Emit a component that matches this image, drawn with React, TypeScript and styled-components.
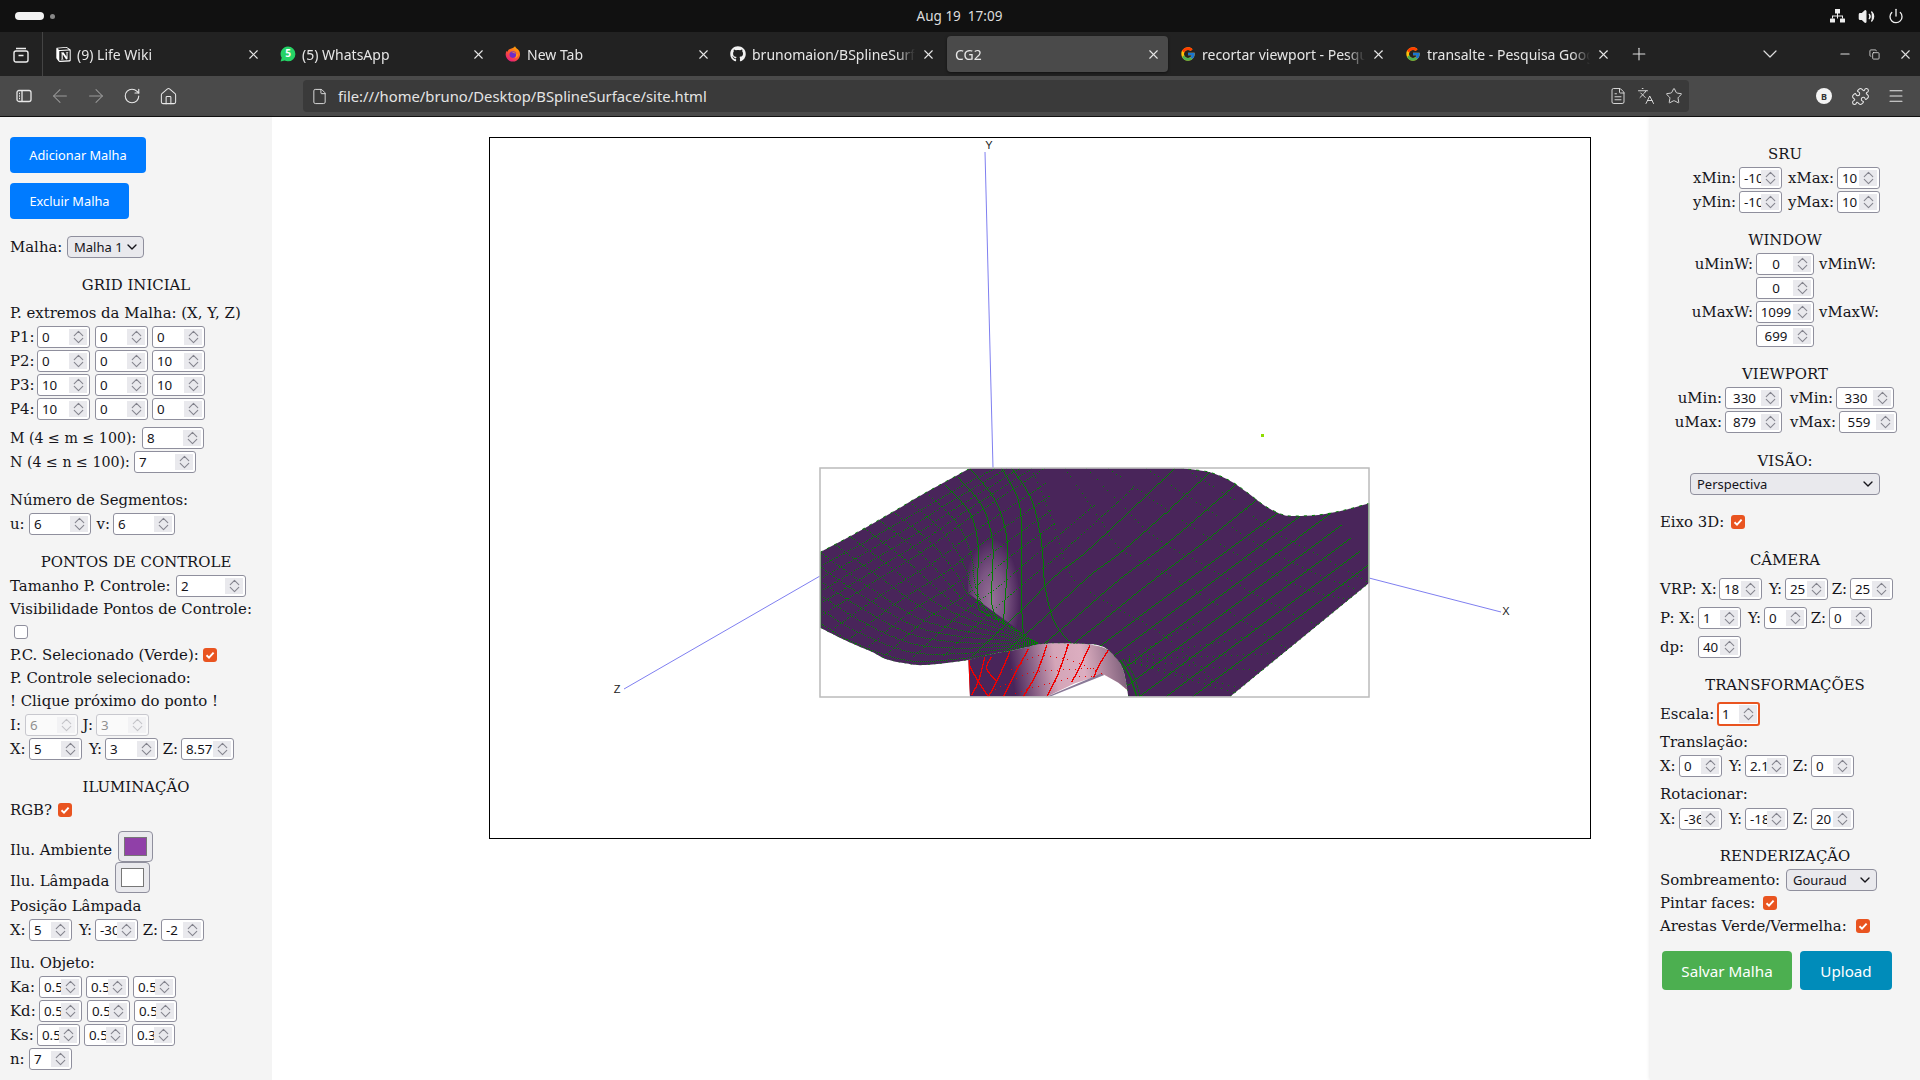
import React from "react"
import styled, { createGlobalStyle } from "styled-components"
import {
  ArrowLeft,
  ArrowRight,
  ChevronDown,
  ChevronUp,
  Copy,
  File,
  FileText,
  Home,
  Languages,
  Menu,
  Minus,
  Plus,
  Power,
  Puzzle,
  RotateCw,
  Star,
  Volume2,
  X,
} from "lucide-react"
import { FaGithub } from "react-icons/fa"
import { FcGoogle } from "react-icons/fc"
import { SiNotion } from "react-icons/si"

const GlobalStyle = createGlobalStyle`
  html, body {
    margin: 0;
    padding: 0;
    width: 1920px;
    height: 1080px;
    overflow: hidden;
    background: #fff;
  }
`

const Screen = styled.div`
  width: 1920px;
  height: 1080px;
  display: flex;
  flex-direction: column;
  font-family: "DejaVu Serif", serif;
  color: #15141a;
`

/* desktop + browser chrome */
const TopBar = styled.div`
  height: 32px;
  flex: none;
  background: #111;
  display: grid;
  grid-template-columns: 1fr auto 1fr;
  align-items: center;
  padding: 0 16px 0 15px;
  color: #ddd;
  font: 13.5px "Noto Sans", sans-serif;
`

const Workspaces = styled.div`
  display: flex;
  align-items: center;
  gap: 6px;
`

const Pill = styled.span`
  width: 29px;
  height: 8px;
  border-radius: 4px;
  background: #f2f2f2;
`

const Dot = styled.span`
  width: 5px;
  height: 5px;
  border-radius: 50%;
  background: #888;
`

const Clock = styled.div`
  white-space: pre;
`

const Tray = styled.div`
  display: flex;
  justify-content: flex-end;
  align-items: center;
  gap: 13px;
  color: #eee;
`

const TabBar = styled.div`
  height: 44px;
  flex: none;
  background: #222;
  display: flex;
  align-items: center;
  color: #e6e6e6;
  font: 14px "Noto Sans", sans-serif;
`

const TabsButton = styled.div`
  width: 42px;
  height: 44px;
  flex: none;
  display: flex;
  align-items: center;
  justify-content: center;
  border-right: 1px solid #444;
  margin-right: 4px;
`

const Tab = styled.div<{ $active?: boolean }>`
  width: 221px;
  height: 36px;
  flex: none;
  margin-right: 4px;
  padding: 0 8px;
  box-sizing: border-box;
  display: flex;
  align-items: center;
  gap: 6px;
  border-radius: 4px;
  background: ${({ $active }) => ($active ? "#4a4a4a" : "transparent")};
  box-shadow: ${({ $active }) => ($active ? "0 1px 3px rgba(0,0,0,.5)" : "none")};

  > svg {
    flex: none;
    margin-right: -1px;
  }
`

const TabIcon = styled.span`
  width: 16px;
  height: 16px;
  flex: none;
  display: flex;
  align-items: center;
  justify-content: center;
`

const TabTitle = styled.span`
  flex: 1;
  min-width: 0;
  overflow: hidden;
  white-space: nowrap;
  mask-image: linear-gradient(to left, transparent 0, #000 18px);
`

const WindowControls = styled.div`
  display: flex;
  align-items: center;
  flex: 1;
  padding-left: 8px;
  color: #ddd;
`

const ToolBar = styled.div`
  height: 40px;
  flex: none;
  background: #4a4a4a;
  border-bottom: 1px solid #111;
  display: flex;
  align-items: center;
  padding-left: 15px;
  color: #e8e8e8;
`

const ToolIcon = styled.span<{ $dim?: boolean; $mr?: number }>`
  width: 18px;
  height: 18px;
  flex: none;
  display: flex;
  align-items: center;
  justify-content: center;
  margin-right: ${({ $mr }) => $mr ?? 18}px;
  color: ${({ $dim }) => ($dim ? "#9a9a9a" : "inherit")};

  svg {
    flex: none;
  }
`

const UrlBar = styled.div`
  width: 1386px;
  height: 32px;
  flex: none;
  margin: 0 126px;
  padding: 0 6px 0 8px;
  box-sizing: border-box;
  border-radius: 4px;
  background: #3a3a3a;
  display: flex;
  align-items: center;
  gap: 10px;
  font: 14.8px "Noto Sans", sans-serif;
  color: #e4e4e4;
`

const UrlText = styled.span`
  flex: 1;
`

const ProfileBadge = styled.span`
  width: 16px;
  height: 16px;
  border-radius: 50%;
  background: #f4f4f4;
  color: #333;
  font: bold 9px "Noto Sans", sans-serif;
  display: flex;
  align-items: center;
  justify-content: center;
`

/* page */
const Page = styled.div`
  flex: 1;
  min-height: 0;
  display: flex;
`

const Sidebar = styled.div<{ $width: number; $top: number }>`
  width: ${({ $width }) => $width}px;
  flex: none;
  box-sizing: border-box;
  padding: ${({ $top }) => $top}px 10px 0;
  background: #f4f4f4;
  box-shadow: 0 0 4px rgba(0, 0, 0, 0.12);
  font-size: 14.9px;
  overflow: hidden;
`

const Main = styled.div`
  flex: 1;
  padding: 20px 0 0 217px;
  background: #fff;
`

const CanvasBox = styled.svg`
  display: block;
  width: 1100px;
  height: 700px;
  border: 1px solid #000;
`

const Row = styled.div<{ $h?: number; $mt?: number; $pl?: number }>`
  display: flex;
  align-items: stretch;
  height: ${({ $h }) => $h ?? 22}px;
  margin-top: ${({ $mt }) => $mt ?? 0}px;
  padding-left: ${({ $pl }) => $pl ?? 0}px;
  white-space: nowrap;
`

const Line = styled(Row)`
  align-items: center;
`

const Heading = styled.div<{ $mt?: number }>`
  height: 22px;
  line-height: 22px;
  margin-top: ${({ $mt }) => $mt ?? 0}px;
  text-align: center;
  white-space: nowrap;
`

const Label = styled.span<{ $w?: number; $right?: boolean; $ml?: number; $pt?: number; $size?: number }>`
  flex: none;
  width: ${({ $w }) => ($w ? `${$w}px` : "auto")};
  margin-left: ${({ $ml }) => $ml ?? 0}px;
  padding-top: ${({ $pt }) => $pt ?? 0}px;
  padding-right: ${({ $right }) => ($right ? 3 : 0)}px;
  box-sizing: border-box;
  display: flex;
  align-items: center;
  justify-content: ${({ $right }) => ($right ? "flex-end" : "flex-start")};
  font-size: ${({ $size }) => ($size ? `${$size}px` : "inherit")};
  white-space: nowrap;
`

const NumBox = styled.div<{ $w: number; $ml?: number; $disabled?: boolean; $focus?: boolean }>`
  width: ${({ $w }) => $w}px;
  flex: none;
  margin-left: ${({ $ml }) => $ml ?? 0}px;
  box-sizing: border-box;
  display: flex;
  align-items: stretch;
  padding: ${({ $focus }) => ($focus ? "1px" : "2px")};
  background: ${({ $disabled }) => ($disabled ? "#fafafa" : "#fff")};
  border: ${({ $focus, $disabled }) =>
    $focus ? "2px solid #e95420" : `1px solid ${$disabled ? "#c8c8ce" : "#8f8f9d"}`};
  border-radius: 3px;
  color: ${({ $disabled }) => ($disabled ? "#909090" : "#15141a")};
  font: 13.33px "Noto Sans", sans-serif;
`

const NumValue = styled.span<{ $center?: boolean }>`
  flex: 1;
  min-width: 0;
  overflow: hidden;
  display: flex;
  align-items: center;
  justify-content: ${({ $center }) => ($center ? "center" : "flex-start")};
  padding-left: ${({ $center }) => ($center ? 0 : 2)}px;
`

const Spin = styled.span<{ $disabled?: boolean }>`
  width: 18px;
  flex: none;
  overflow: hidden;
  background: ${({ $disabled }) => ($disabled ? "#f2f2f4" : "#e9e9ed")};
  color: ${({ $disabled }) => ($disabled ? "#c4c4c8" : "#85858f")};
  display: flex;
  flex-direction: column;
  align-items: center;
  justify-content: center;
  line-height: 0;

  svg {
    flex: none;
    margin: -5px 0;
  }
`

const SelectBox = styled.div<{ $w: number }>`
  width: ${({ $w }) => $w}px;
  flex: none;
  box-sizing: border-box;
  display: flex;
  align-items: center;
  justify-content: space-between;
  padding: 0 3px 0 6px;
  background: #e9e9ed;
  border: 1px solid #8f8f9d;
  border-radius: 4px;
  font: 13px "Noto Sans", sans-serif;
  color: #15141a;
`

const CheckMark = styled.span<{ $on?: boolean }>`
  width: 14px;
  height: 14px;
  flex: none;
  box-sizing: border-box;
  border-radius: 3px;
  background: ${({ $on }) => ($on ? "#e95420" : "#fff")};
  border: ${({ $on }) => ($on ? "none" : "1px solid #8f8f9d")};
  display: flex;
  align-items: center;
  justify-content: center;
`

const ColorWell = styled.div`
  width: 35px;
  height: 31px;
  flex: none;
  box-sizing: border-box;
  padding: 5px;
  background: #e9e9ed;
  border: 1px solid #8f8f9d;
  border-radius: 4px;
  display: flex;
`

const ColorFill = styled.span<{ $color: string }>`
  flex: 1;
  background: ${({ $color }) => $color};
  border: 1px solid #777;
`

const Button = styled.button<{ $w: number; $h: number; $bg: string; $ml?: number; $mt?: number; $size: number }>`
  display: block;
  width: ${({ $w }) => $w}px;
  height: ${({ $h }) => $h}px;
  margin-left: ${({ $ml }) => $ml ?? 0}px;
  margin-top: ${({ $mt }) => $mt ?? 0}px;
  flex: none;
  padding: 0;
  border: none;
  border-radius: 4px;
  background: ${({ $bg }) => $bg};
  color: #fff;
  font: ${({ $size }) => $size}px "Noto Sans", sans-serif;
`

const Num: React.FC<{
  w: number
  v: string
  ml?: number
  center?: boolean
  disabled?: boolean
  focus?: boolean
}> = ({ w, v, ml, center, disabled, focus }) => (
  <NumBox $w={w} $ml={ml} $disabled={disabled} $focus={focus}>
    <NumValue $center={center}>{v}</NumValue>
    <Spin $disabled={disabled}>
      <ChevronUp size={17} strokeWidth={1.5} />
      <ChevronDown size={17} strokeWidth={1.5} />
    </Spin>
  </NumBox>
)

const Select: React.FC<{ w: number; v: string }> = ({ w, v }) => (
  <SelectBox $w={w}>
    {v}
    <ChevronDown size={16} strokeWidth={2} />
  </SelectBox>
)

const Check: React.FC<{ on?: boolean }> = ({ on }) => (
  <CheckMark $on={on}>
    {on && (
      <svg width="10" height="10" viewBox="0 0 10 10">
        <path d="M1.5 5.2 4 7.6 8.6 2.6" fill="none" stroke="#fff" strokeWidth="1.9" />
      </svg>
    )}
  </CheckMark>
)

/* surface drawing, coordinates taken at 3x from the viewport corner */
type P = number[]

const curve = (p: P[]) => {
  let d = `M${p[0][0]} ${p[0][1]}`
  for (let i = 0; i < p.length - 1; i++) {
    const a = p[i - 1] || p[i]
    const b = p[i]
    const c = p[i + 1]
    const e = p[i + 2] || c
    d += `C${b[0] + (c[0] - a[0]) / 6} ${b[1] + (c[1] - a[1]) / 6} ${c[0] - (e[0] - b[0]) / 6} ${
      c[1] - (e[1] - b[1]) / 6
    } ${c[0]} ${c[1]}`
  }
  return d
}

// lines between neighbouring guides, steps[i] of them between guide i and i + 1
const family = (guides: P[][], steps: number[]) => {
  const out: { pts: P[]; g: number }[] = []
  guides.slice(0, -1).forEach((from, g) => {
    for (let s = 0; s < steps[g]; s++) {
      const t = s / steps[g]
      out.push({
        g,
        pts: from.map((p, k) => [
          p[0] + (guides[g + 1][k][0] - p[0]) * t,
          p[1] + (guides[g + 1][k][1] - p[1]) * t,
        ]),
      })
    }
  })
  out.push({ g: guides.length - 1, pts: guides[guides.length - 1] })
  return out
}

const leftEdge: P[] = [[15, 277], [100, 232], [235, 155], [320, 105], [465, 25], [520, -5]]
const rightEdge: P[] = [
  [1050, 10], [1105, 25], [1185, 37], [1250, 65], [1300, 100], [1350, 138], [1400, 163], [1430, 168],
  [1510, 165], [1590, 150], [1663, 130],
]
const lowerEdge: P[] = [
  [940, 710], [930, 650], [915, 610], [880, 570], [850, 556], [820, 553], [750, 550], [680, 552],
  [600, 570], [540, 580], [460, 600], [330, 615], [270, 610], [215, 598], [170, 575], [100, 545], [15, 503],
]
const surfacePath = `${curve(leftEdge)}L1050 -5${curve(rightEdge).replace("M", "L")}L1663 368L1245 710${curve(
  lowerEdge
).replace("M", "L")}Z`

const undersidePath = `${curve([
  [460, 600], [540, 580], [600, 570], [680, 552], [750, 550], [820, 553], [880, 570], [915, 610], [930, 650], [937, 690],
])}L910 668L865 643L780 670L695 710L465 710Z`

const uGuides: P[][] = [
  [[15, 490], [120, 550], [270, 600], [400, 600], [540, 580], [670, 550]],
  [[15, 277], [160, 380], [300, 470], [430, 510], [560, 530], [670, 550]],
  [[235, 155], [350, 250], [430, 350], [465, 410], [560, 480], [670, 550]],
  [[390, 75], [465, 160], [490, 260], [488, 350], [490, 440], [530, 470]],
  [[465, 25], [540, 120], [575, 230], [575, 350], [570, 420], [565, 490]],
  [[560, 25], [610, 120], [620, 230], [620, 350], [620, 440], [625, 520]],
  [[590, 25], [650, 120], [680, 250], [690, 380], [720, 490], [770, 550]],
  [[650, 25], [720, 200], [770, 350], [880, 430], [1050, 530], [1240, 710]],
  [[750, 25], [850, 170], [920, 270], [1070, 350], [1280, 480], [1500, 620]],
  [[880, 25], [1000, 110], [1130, 200], [1280, 290], [1480, 390], [1620, 420]],
  [[1105, 25], [1180, 70], [1280, 135], [1350, 200], [1500, 280], [1663, 368]],
]

const vGuides: P[][] = [
  [[15, 320], [160, 240], [300, 160], [420, 90], [540, 25]],
  [[15, 470], [170, 370], [330, 270], [470, 170], [690, 25]],
  [[200, 598], [330, 480], [460, 400], [560, 310], [720, 190]],
  [[470, 590], [620, 450], [730, 340], [820, 270], [1080, 25]],
  [[820, 585], [960, 480], [1100, 375], [1300, 225], [1500, 75]],
  [[960, 840], [1100, 735], [1300, 585], [1500, 435], [1663, 313]],
]

// sparse fan of dotted lines next to the fold, lower right
const fanTips: P[] = [[1180, 470], [1300, 530], [1390, 580], [1430, 640], [1380, 710], [1300, 710]]

const redLines: P[][] = [
  [[510, 590], [490, 665], [470, 705]],
  [[465, 620], [490, 665], [520, 710]],
  [[530, 590], [515, 625], [545, 665]],
  [[585, 575], [545, 665], [520, 710]],
  [[640, 568], [600, 640], [565, 710]],
  [[695, 556], [665, 640], [625, 710]],
  [[760, 552], [730, 640], [695, 710]],
  [[825, 555], [790, 630], [770, 665]],
  [[880, 570], [850, 620], [835, 655]],
]

const redDots: P[][] = [
  [[560, 650], [660, 590], [760, 600], [860, 640]],
  [[540, 690], [640, 640], [740, 630], [840, 625]],
  [[600, 700], [700, 670], [800, 650], [880, 650]],
]

const Surface: React.FC = () => (
  <g transform="translate(815 460) scale(0.33333)" fill="none">
    <defs>
      <clipPath id="viewClip">
        <rect x="15" y="25" width="1648" height="685" />
      </clipPath>
      <clipPath id="surfaceClip">
        <path d={surfacePath} />
      </clipPath>
      <clipPath id="underClip">
        <path d={undersidePath} />
      </clipPath>
      <clipPath id="dimpleClip">
        <path d="M456 240 L460 400 L680 560 L680 200 Z" />
      </clipPath>
      <linearGradient id="underFill" gradientUnits="userSpaceOnUse" x1="520" y1="670" x2="930" y2="610">
        <stop offset="0" stopColor="#49255a" />
        <stop offset="0.18" stopColor="#49255a" />
        <stop offset="0.5" stopColor="#d4a5b8" />
        <stop offset="0.7" stopColor="#dcaec0" />
        <stop offset="1" stopColor="#80607c" />
      </linearGradient>
      <radialGradient id="dimpleGlow" gradientUnits="userSpaceOnUse" cx="0" cy="0" r="1"
        gradientTransform="translate(530 420) scale(85 185)">
        <stop offset="0" stopColor="#957296" />
        <stop offset="0.5" stopColor="#7a5482" />
        <stop offset="1" stopColor="#49255a" />
      </radialGradient>
    </defs>
    <g clipPath="url(#viewClip)">
      <path d={undersidePath} fill="url(#underFill)" />
      <path d="M695 710 L860 640 L868 645 L700 712 Z" fill="#8a7a98" />
      <g clipPath="url(#underClip)">
        {redLines.map((l, i) => (
          <path key={i} d={curve(l)} stroke="#f00000" strokeWidth="4" shapeRendering="crispEdges" />
        ))}
        {redDots.map((l, i) => (
          <path key={i} d={curve(l)} stroke="#f00000" strokeWidth="3" strokeDasharray="3 15" shapeRendering="crispEdges" />
        ))}
        <path d="M462 600 V710" stroke="#f00000" strokeWidth="6" />
        <path d="M860 642 L937 690" stroke="#f00000" strokeWidth="3" strokeDasharray="3 3" />
      </g>
      <path d={surfacePath} fill="#49255a" />
      <g clipPath="url(#surfaceClip)">
        <g clipPath="url(#dimpleClip)">
          <ellipse cx="530" cy="420" rx="85" ry="185" fill="url(#dimpleGlow)" />
        </g>
        {family(uGuides, [5, 5, 3, 2, 1, 1, 1, 1, 2, 2]).map(({ pts, g }, i) => (
          <path
            key={i}
            d={curve(pts)}
            stroke="#008000"
            strokeWidth="3"
            strokeDasharray={g >= 3 && g <= 6 ? undefined : g >= 7 ? "3 12" : "3 3"}
            shapeRendering="crispEdges"
          />
        ))}
        {family(vGuides, [4, 4, 3, 4, 6]).map(({ pts, g }, i) => (
          <path
            key={i}
            d={curve(pts)}
            stroke="#008000"
            strokeWidth="3"
            strokeDasharray={g >= 3 ? undefined : "3 3"}
            shapeRendering="crispEdges"
          />
        ))}
        {fanTips.map((tip, i) => (
          <path key={i} d={`M925 600L${tip[0]} ${tip[1]}`} stroke="#008000" strokeWidth="3" strokeDasharray="3 15" shapeRendering="crispEdges" />
        ))}
        <path d={curve(lowerEdge)} stroke="#008000" strokeWidth="3" strokeDasharray="6 12" />
        <path d={curve([[915, 600], [945, 650], [965, 710]])} stroke="#008000" strokeWidth="4" />
        <path d={curve([[930, 600], [958, 650], [975, 710]])} stroke="#008000" strokeWidth="3" strokeDasharray="9 3" />
      </g>
      <path d={curve(leftEdge)} stroke="#008000" strokeWidth="3" strokeDasharray="9 15" />
      <path d={curve(rightEdge)} stroke="#008000" strokeWidth="3" strokeDasharray="9 15" />
      <path d="M1245 710 L1663 368" stroke="#008000" strokeWidth="3" strokeDasharray="6 12" />
      <path d="M16 277 V503" stroke="#008000" strokeWidth="5" />
      <path d="M1662 130 V368" stroke="#008000" strokeWidth="5" />
    </g>
  </g>
)

const NotionIcon = () => <SiNotion size={15} color="#fff" />

const WhatsAppIcon = () => (
  <svg width="16" height="16" viewBox="0 0 16 16">
    <path d="M8 .5a7.4 7.4 0 0 1 0 14.8 7.4 7.4 0 0 1-3.4-.8L.6 15.6l1.1-3.9A7.4 7.4 0 0 1 8 .5Z" fill="#25d366" />
    <text x="8" y="11.4" textAnchor="middle" fontSize="10" fontWeight="bold" fill="#fff" fontFamily="Noto Sans, sans-serif">
      5
    </text>
  </svg>
)

const FirefoxIcon = () => (
  <svg width="16" height="16" viewBox="0 0 16 16">
    <defs>
      <linearGradient id="foxBody" x1="0.8" y1="0" x2="0.2" y2="1">
        <stop offset="0" stopColor="#ffb000" />
        <stop offset="0.5" stopColor="#ff5a2b" />
        <stop offset="1" stopColor="#e31587" />
      </linearGradient>
    </defs>
    <path d="M10 .3c.2 1.6 3 2.5 4.2 4.7A7.2 7.2 0 1 1 1.5 5l1 .8C3 4 4 3.2 5 3c1.8-.6 4-1 5-2.7Z" fill="url(#foxBody)" />
    <circle cx="7.8" cy="8.6" r="3.3" fill="#6e2bc9" />
    <path d="M3.2 8c1.5-2.6 4.800-3 6.800-1.200 1.600 1.400 1.600 4-.2 5.400 2.800-.4 3.400-2.900 3.200-4.400C12 10 9 6 6.500 6 5 6 3.800 6.800 3.200 8Z" fill="#ff9a1f" />
  </svg>
)

const SidebarToggleIcon = () => (
  <svg width="16" height="14" viewBox="0 0 16 14" fill="none" stroke="currentColor" strokeWidth="1.3">
    <rect x="1" y="1.500" width="14" height="11" rx="2" />
    <path d="M6 1.500v11M3 4.500h1M3 7h1M3 9.500h1" />
  </svg>
)

const TabsTrayIcon = () => (
  <svg width="16" height="17" viewBox="0 0 16 17" fill="none" stroke="#eee" strokeWidth="1.4">
    <rect x="1" y="5" width="14" height="11" rx="2" />
    <path d="M3 2.500h10M5.500 9.500h5" />
  </svg>
)

const NetworkIcon = () => (
  <svg width="15" height="14" viewBox="0 0 15 14" fill="#eee">
    <path d="M5 0h5v4.500H8v2h5v3h-1v-2H8v2H7v-2H3v2H2v-3h5v-2H5Z" />
    <rect x="0" y="9.500" width="5" height="4" rx=".5" />
    <rect x="10" y="9.500" width="5" height="4" rx=".5" />
  </svg>
)

const tabs = [
  { title: "(9) Life Wiki", icon: <NotionIcon /> },
  { title: "(5) WhatsApp", icon: <WhatsAppIcon /> },
  { title: "New Tab", icon: <FirefoxIcon /> },
  { title: "brunomaion/BSplineSurface", icon: <FaGithub size={16} color="#f2f2f2" /> },
  { title: "CG2", active: true },
  { title: "recortar viewport - Pesquisa", icon: <FcGoogle size={16} /> },
  { title: "transalte - Pesquisa Google", icon: <FcGoogle size={16} /> },
]

export default function App() {
  return (
    <Screen>
      <GlobalStyle />
      <TopBar>
        <Workspaces>
          <Pill />
          <Dot />
        </Workspaces>
        <Clock>Aug 19  17:09</Clock>
        <Tray>
          <NetworkIcon />
          <Volume2 size={17} fill="#eee" />
          <Power size={16} />
        </Tray>
      </TopBar>

      <TabBar>
        <TabsButton>
          <TabsTrayIcon />
        </TabsButton>
        {tabs.map((tab) => (
          <Tab key={tab.title} $active={tab.active}>
            {tab.icon && <TabIcon>{tab.icon}</TabIcon>}
            <TabTitle>{tab.title}</TabTitle>
            <X size={15} strokeWidth={1.8} />
          </Tab>
        ))}
        <WindowControls>
          <ToolIcon $mr={113}>
            <Plus size={20} strokeWidth={1.3} />
          </ToolIcon>
          <ToolIcon $mr={57}>
            <ChevronDown size={24} strokeWidth={1.2} />
          </ToolIcon>
          <ToolIcon $mr={11}>
            <Minus size={14} />
          </ToolIcon>
          <ToolIcon $mr={13}>
            <Copy size={11} strokeWidth={1.8} />
          </ToolIcon>
          <ToolIcon $mr={0}>
            <X size={15} strokeWidth={1.8} />
          </ToolIcon>
        </WindowControls>
      </TabBar>

      <ToolBar>
        <ToolIcon>
          <SidebarToggleIcon />
        </ToolIcon>
        <ToolIcon $dim>
          <ArrowLeft size={22} strokeWidth={1.1} />
        </ToolIcon>
        <ToolIcon $dim>
          <ArrowRight size={22} strokeWidth={1.1} />
        </ToolIcon>
        <ToolIcon>
          <RotateCw size={18} strokeWidth={1.5} />
        </ToolIcon>
        <ToolIcon $mr={0}>
          <Home size={19} strokeWidth={1.3} />
        </ToolIcon>
        <UrlBar>
          <File size={17} strokeWidth={1.3} />
          <UrlText>file:///home/bruno/Desktop/BSplineSurface/site.html</UrlText>
          <FileText size={18} strokeWidth={1.2} />
          <Languages size={18} strokeWidth={1.2} />
          <Star size={18} strokeWidth={1.2} />
        </UrlBar>
        <ToolIcon>
          <ProfileBadge>B</ProfileBadge>
        </ToolIcon>
        <ToolIcon>
          <Puzzle size={19} strokeWidth={1.3} />
        </ToolIcon>
        <ToolIcon $mr={0}>
          <Menu size={18} strokeWidth={1.4} />
        </ToolIcon>
      </ToolBar>

      <Page>
        <Sidebar $width={272} $top={20}>
          <Button $w={136} $h={36} $bg="#007bff" $size={12.8}>Adicionar Malha</Button>
          <Button $w={119} $h={36} $bg="#007bff" $size={12.8} $mt={10}>Excluir Malha</Button>
          <Row $mt={17}>
            <Label $w={57}>Malha:</Label>
            <Select w={77} v="Malha 1" />
          </Row>
          <Heading $mt={16}>GRID INICIAL</Heading>
          <Line $mt={6}>P. extremos da Malha: (X, Y, Z)</Line>
          <Row $mt={2}><Label $w={27}>P1:</Label><Num w={53} v="0" /><Num w={53} v="0" ml={5} /><Num w={53} v="0" ml={4} /></Row>
          <Row $mt={2}><Label $w={27}>P2:</Label><Num w={53} v="0" /><Num w={53} v="0" ml={5} /><Num w={53} v="10" ml={4} /></Row>
          <Row $mt={2}><Label $w={27}>P3:</Label><Num w={53} v="10" /><Num w={53} v="0" ml={5} /><Num w={53} v="10" ml={4} /></Row>
          <Row $mt={2}><Label $w={27}>P4:</Label><Num w={53} v="10" /><Num w={53} v="0" ml={5} /><Num w={53} v="0" ml={4} /></Row>
          <Row $mt={7}><Label $w={132} $size={14.2}>M (4 ≤ m ≤ 100):</Label><Num w={62} v="8" /></Row>
          <Row $mt={2}><Label $w={124} $size={14.2}>N (4 ≤ n ≤ 100):</Label><Num w={62} v="7" /></Row>
          <Line $mt={16}>Número de Segmentos:</Line>
          <Row $mt={2}><Label $w={19}>u:</Label><Num w={62} v="6" /><Label $w={22} $right>v:</Label><Num w={62} v="6" /></Row>

          <Heading $mt={16}>PONTOS DE CONTROLE</Heading>
          <Row $mt={2}><Label $w={166}>Tamanho P. Controle:</Label><Num w={70} v="2" /></Row>
          <Line $h={23}>Visibilidade Pontos de Controle:</Line>
          <Line $h={23} $pl={4}><Check /></Line>
          <Line $h={23}><Label $w={193}>P.C. Selecionado (Verde):</Label><Check on /></Line>
          <Line $h={23}>P. Controle selecionado:</Line>
          <Line $h={23}>! Clique próximo do ponto !</Line>
          <Row $mt={2}><Label $w={15}>I:</Label><Num w={53} v="6" disabled /><Label $w={18} $right>J:</Label><Num w={53} v="3" disabled /></Row>
          <Row $mt={2}><Label $w={19}>X:</Label><Num w={53} v="5" /><Label $w={23} $right>Y:</Label><Num w={53} v="3" /><Label $w={23} $right>Z:</Label><Num w={53} v="8.57" /></Row>

          <Heading $mt={16}>ILUMINAÇÃO</Heading>
          <Line $h={23}><Label $w={48}>RGB?</Label><Check on /></Line>
          <Row $mt={10} $h={31}><Label $w={108} $pt={7}>Ilu. Ambiente</Label><ColorWell><ColorFill $color="#9040a8" /></ColorWell></Row>
          <Row $h={31}><Label $w={105} $pt={7}>Ilu. Lâmpada</Label><ColorWell><ColorFill $color="#ffffff" /></ColorWell></Row>
          <Line $h={23} $mt={1}>Posição Lâmpada</Line>
          <Row $mt={2}><Label $w={19}>X:</Label><Num w={43} v="5" /><Label $w={23} $right>Y:</Label><Num w={43} v="-30" /><Label $w={23} $right>Z:</Label><Num w={43} v="-2" /></Row>
          <Line $mt={11}>Ilu. Objeto:</Line>
          <Row $mt={2}><Label $w={29}>Ka:</Label><Num w={43} v="0.5" /><Num w={43} v="0.5" ml={4} /><Num w={43} v="0.5" ml={4} /></Row>
          <Row $mt={2}><Label $w={29}>Kd:</Label><Num w={43} v="0.5" /><Num w={43} v="0.5" ml={5} /><Num w={43} v="0.5" ml={4} /></Row>
          <Row $mt={2}><Label $w={27}>Ks:</Label><Num w={43} v="0.5" /><Num w={43} v="0.5" ml={4} /><Num w={43} v="0.3" ml={5} /></Row>
          <Row $mt={2}><Label $w={19}>n:</Label><Num w={43} v="7" /></Row>
        </Sidebar>

        <Main>
          <CanvasBox viewBox="490 138 1100 700">
            <g stroke="#7f7ff0" strokeWidth="1" fill="none">
              <path d="M985 152 L993 468" />
              <path d="M624 689 L820 576" />
              <path d="M1369 578 L1501 612" />
            </g>
            <g fontFamily="Liberation Sans, sans-serif" fontSize="11" fill="#222" textAnchor="middle">
              <text x="989" y="149">Y</text>
              <text x="617" y="693">Z</text>
              <text x="1506" y="615">X</text>
            </g>
            <rect x="1261" y="434" width="3" height="3" fill="#8fdc00" />
            <Surface />
            <rect x="820" y="468" width="549" height="229" fill="none" stroke="#bbb" strokeWidth="1.5" />
          </CanvasBox>
        </Main>

        <Sidebar $width={270} $top={26}>
          <Heading>SRU</Heading>
          <Row $mt={2}><Label $w={79} $right>xMin:</Label><Num w={43} v="-10" /><Label $w={55} $right>xMax:</Label><Num w={43} v="10" /></Row>
          <Row $mt={2}><Label $w={79} $right>yMin:</Label><Num w={43} v="-10" /><Label $w={55} $right>yMax:</Label><Num w={43} v="10" /></Row>

          <Heading $mt={16}>WINDOW</Heading>
          <Row $mt={2}><Label $w={96} $right>uMinW:</Label><Num w={58} v="0" center /><Label $ml={5}>vMinW:</Label></Row>
          <Row $mt={2} $pl={96}><Num w={58} v="0" center /></Row>
          <Row $mt={2}><Label $w={96} $right>uMaxW:</Label><Num w={58} v="1099" center /><Label $ml={5}>vMaxW:</Label></Row>
          <Row $mt={2} $pl={96}><Num w={58} v="699" center /></Row>

          <Heading $mt={16}>VIEWPORT</Heading>
          <Row $mt={2}><Label $w={65} $right>uMin:</Label><Num w={57} v="330" center /><Label $w={54} $right>vMin:</Label><Num w={58} v="330" center /></Row>
          <Row $mt={2}><Label $w={65} $right>uMax:</Label><Num w={57} v="879" center /><Label $w={57} $right>vMax:</Label><Num w={58} v="559" center /></Row>

          <Heading $mt={17}>VISÃO:</Heading>
          <Row $mt={1} $pl={30}><Select w={190} v="Perspectiva" /></Row>
          <Line $mt={16}><Label $w={71}>Eixo 3D:</Label><Check on /></Line>

          <Heading $mt={16}>CÂMERA</Heading>
          <Row $mt={7}><Label $w={59}>VRP: X:</Label><Num w={43} v="18" /><Label $w={23} $right>Y:</Label><Num w={43} v="25" /><Label $w={22} $right>Z:</Label><Num w={43} v="25" /></Row>
          <Row $mt={7}><Label $w={38}>P: X:</Label><Num w={43} v="1" /><Label $w={23} $right>Y:</Label><Num w={43} v="0" /><Label $w={22} $right>Z:</Label><Num w={43} v="0" /></Row>
          <Row $mt={7}><Label $w={38}>dp:</Label><Num w={43} v="40" /></Row>

          <Heading $mt={16}>TRANSFORMAÇÕES</Heading>
          <Row $mt={6} $h={24}><Label $w={57}>Escala:</Label><Num w={43} v="1" focus /></Row>
          <Line $mt={5}>Translação:</Line>
          <Row $mt={2}><Label $w={19}>X:</Label><Num w={43} v="0" /><Label $w={23} $right>Y:</Label><Num w={43} v="2.1" /><Label $w={23} $right>Z:</Label><Num w={43} v="0" /></Row>
          <Line $mt={6}>Rotacionar:</Line>
          <Row $mt={2.5}><Label $w={19}>X:</Label><Num w={43} v="-36" /><Label $w={23} $right>Y:</Label><Num w={43} v="-18" /><Label $w={23} $right>Z:</Label><Num w={43} v="20" /></Row>

          <Heading $mt={15.5}>RENDERIZAÇÃO</Heading>
          <Row $mt={2}><Label $w={126}>Sombreamento:</Label><Select w={91} v="Gouraud" /></Row>
          <Line $mt={1}><Label $w={103}>Pintar faces:</Label><Check on /></Line>
          <Line $mt={1}><Label $w={196}>Arestas Verde/Vermelha:</Label><Check on /></Line>
          <Row $mt={14} $h={39}>
            <Button $w={130} $h={39} $bg="#4caf50" $ml={2} $size={15.2}>Salvar Malha</Button>
            <Button $w={92} $h={39} $bg="#008cba" $ml={8} $size={15.2}>Upload</Button>
          </Row>
        </Sidebar>
      </Page>
    </Screen>
  )
}
